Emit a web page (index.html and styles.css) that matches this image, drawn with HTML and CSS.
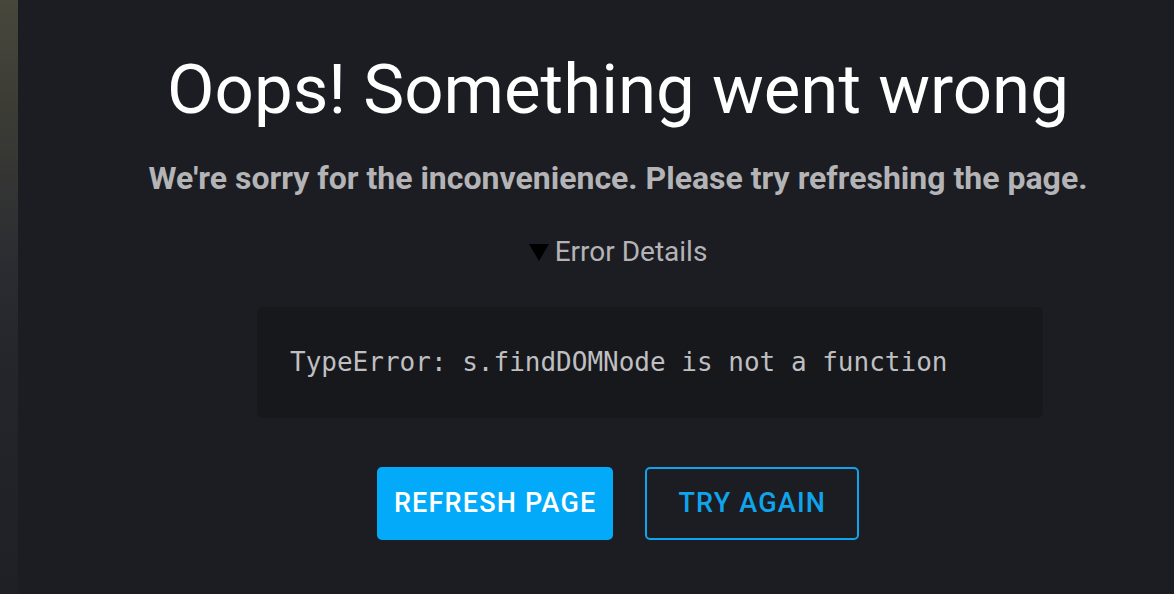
FILE: index.html
```html
<!DOCTYPE html>
<html lang="en">

<head>
    <meta charset="UTF-8">
    <meta name="viewport" content="width=device-width, initial-scale=1.0">
    <title>Something went wrong</title>
    <link rel="stylesheet" href="styles.css">
</head>

<body>
    <aside class="backdrop"></aside>
    <main class="error-page">
        <h1 class="title">Oops! Something went wrong</h1>
        <p class="subtitle">We're sorry for the inconvenience. Please try refreshing the page.</p>
        <details class="error-details" open>
            <summary><span class="arrow"></span><span class="label">Error Details</span></summary>
            <pre class="error-box">TypeError: s.findDOMNode is not a function</pre>
        </details>
        <div class="actions">
            <button class="btn btn-primary">Refresh Page</button>
            <button class="btn btn-outline">Try Again</button>
        </div>
    </main>
</body>

</html>
```

FILE: styles.css
```css
html,
body {
    margin: 0;
    height: 100%;
}

body {
    display: flex;
    background-color: #1c1d22;
    font-family: Roboto, 'Liberation Sans', sans-serif;
    overflow: hidden;
}

.backdrop {
    width: 18px;
    flex-shrink: 0;
    background: linear-gradient(180deg, #47473c 0%, #3b3b35 20%, #2a2c31 45%, #24262b 60%, #1f2025 100%);
}

.error-page {
    flex: 1;
    display: flex;
    flex-direction: column;
    align-items: center;
    padding: 49px 0 0 44px;
    background-color: #1c1d22;
}

.title {
    margin: 0;
    font-size: 69px;
    font-weight: 400;
    line-height: 1.2;
    color: #ffffff;
    white-space: nowrap;
}

.subtitle {
    margin: 27px 0 0;
    font-size: 32px;
    font-weight: 700;
    line-height: 1.2;
    color: #b4b4b6;
    white-space: nowrap;
}

.error-details {
    margin-top: 38px;
    display: flex;
    flex-direction: column;
    align-items: center;
}

.error-details summary {
    display: flex;
    align-items: center;
    list-style: none;
    font-size: 28px;
    line-height: 1.2;
    cursor: pointer;
}

.error-details summary::-webkit-details-marker {
    display: none;
}

.error-details .arrow {
    width: 0;
    height: 0;
    margin: 2px 6px 0 0;
    border-left: 10px solid transparent;
    border-right: 10px solid transparent;
    border-top: 17px solid #000;
}

.error-details .label {
    color: #b4b4b6;
}

.error-box {
    box-sizing: border-box;
    width: 786px;
    margin: 38px 0 0 64px;
    padding: 36px 33px;
    background-color: #17181c;
    border-radius: 6px;
    font-family: 'DejaVu Sans Mono', monospace;
    font-size: 26px;
    line-height: 1.5;
    color: #bfbfc1;
}

.actions {
    display: flex;
    gap: 32px;
    margin-top: 49px;
}

.btn {
    height: 73px;
    font-family: Roboto, sans-serif;
    font-size: 27px;
    font-weight: 500;
    letter-spacing: 1.2px;
    text-transform: uppercase;
    border-radius: 5px;
    cursor: pointer;
}

.btn-primary {
    padding: 0 17px;
    border: none;
    background-color: #03aaf9;
    color: #fff;
}

.btn-outline {
    padding: 0 31px;
    border: 2px solid #0ea5ec;
    background-color: transparent;
    color: #0ea5ec;
}
```
